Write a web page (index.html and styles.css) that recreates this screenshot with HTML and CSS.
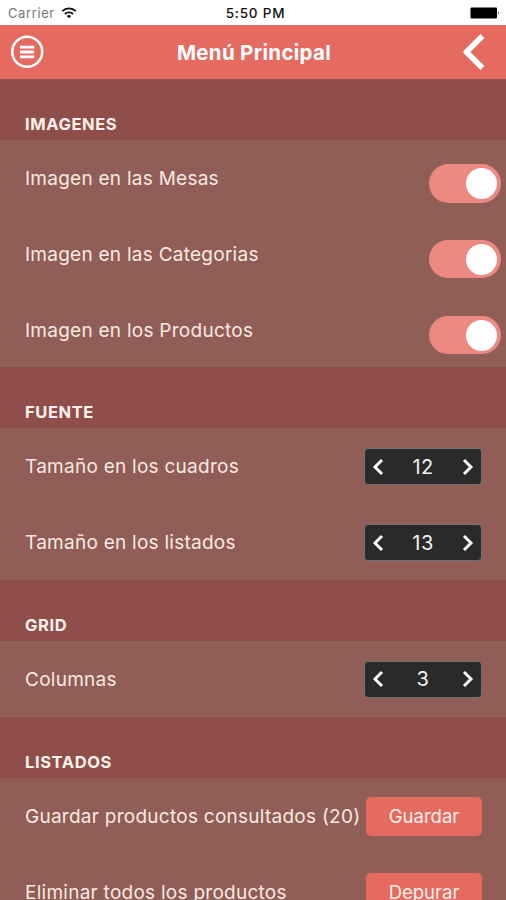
FILE: index.html
```html
<!DOCTYPE html>
<html lang="es">
<head>
    <meta charset="UTF-8">
    <meta name="viewport" content="width=device-width, initial-scale=1.0">
    <title>Menú Principal</title>
    <link rel="stylesheet" href="styles.css">
</head>
<body>
    <!-- Status bar -->
    <div class="status-bar">
        <div class="carrier">
            <span>Carrier</span>
            <svg class="wifi" width="16" height="12" viewBox="0 0 16 12" fill="none" stroke="#111" stroke-width="1.8">
                <path d="M1.2 4.2a9.6 9.6 0 0 1 13.6 0"/>
                <path d="M3.9 7a5.8 5.8 0 0 1 8.2 0"/>
                <path d="M5.8 9.1a3.2 3.2 0 0 1 4.4 0L8 11.2z" fill="#111" stroke="none"/>
            </svg>
        </div>
        <span class="time">5:50 PM</span>
        <svg class="battery" width="30" height="12" viewBox="0 0 30 12">
            <rect x="0.5" y="0.5" width="26.5" height="11" rx="1"/>
            <path d="M28 4.2q1.4 1.8 0 3.6z"/>
        </svg>
    </div>

    <!-- Header -->
    <header>
        <button class="icon-button" aria-label="Menú">
            <svg width="34" height="34" viewBox="0 0 34 34" fill="none" stroke="#fff">
                <circle cx="17.2" cy="16.8" r="15" stroke-width="2.5"/>
                <path d="M10 12.2h14.2M10 17h14.2M10 21.8h14.2" stroke-width="2.8"/>
            </svg>
        </button>
        <h1>Menú Principal</h1>
        <button class="icon-button" aria-label="Volver">
            <svg width="24" height="38" viewBox="0 0 24 38" fill="none" stroke="#fff" stroke-width="5.6" stroke-linejoin="round">
                <path d="M20.4 3L4.4 19l16 16"/>
            </svg>
        </button>
    </header>

    <!-- Main Content -->
    <main>
        <h2>IMAGENES</h2>
        <div class="row">
            <span class="label">Imagen en las Mesas</span>
            <span class="switch"></span>
        </div>
        <div class="row">
            <span class="label">Imagen en las Categorias</span>
            <span class="switch"></span>
        </div>
        <div class="row">
            <span class="label">Imagen en los Productos</span>
            <span class="switch"></span>
        </div>

        <h2>FUENTE</h2>
        <div class="row">
            <span class="label">Tamaño en los cuadros</span>
            <div class="stepper">
                <svg width="12" height="18" viewBox="0 0 12 18"><path d="M10 2L3 9l7 7"/></svg>
                <span>12</span>
                <svg width="12" height="18" viewBox="0 0 12 18"><path d="M2 2l7 7-7 7"/></svg>
            </div>
        </div>
        <div class="row">
            <span class="label">Tamaño en los listados</span>
            <div class="stepper">
                <svg width="12" height="18" viewBox="0 0 12 18"><path d="M10 2L3 9l7 7"/></svg>
                <span>13</span>
                <svg width="12" height="18" viewBox="0 0 12 18"><path d="M2 2l7 7-7 7"/></svg>
            </div>
        </div>

        <h2>GRID</h2>
        <div class="row">
            <span class="label">Columnas</span>
            <div class="stepper">
                <svg width="12" height="18" viewBox="0 0 12 18"><path d="M10 2L3 9l7 7"/></svg>
                <span>3</span>
                <svg width="12" height="18" viewBox="0 0 12 18"><path d="M2 2l7 7-7 7"/></svg>
            </div>
        </div>

        <h2>LISTADOS</h2>
        <div class="row">
            <span class="label">Guardar productos consultados (20)</span>
            <button class="action-button">Guardar</button>
        </div>
        <div class="row">
            <span class="label">Eliminar todos los productos</span>
            <button class="action-button">Depurar</button>
        </div>
    </main>
</body>
</html>
```

FILE: styles.css
```css
/* General Styles */
* {
    margin: 0;
    padding: 0;
    box-sizing: border-box;
}

body {
    height: 900px;
    overflow: hidden;
    background: #905d57;
    color: #fbe9e2;
    font-family: Inter, "Liberation Sans", sans-serif;
}

svg {
    display: block;
}

button {
    border: none;
    font-family: inherit;
    cursor: pointer;
}

/* Status bar */
.status-bar {
    display: grid;
    grid-template-columns: 1fr auto 1fr;
    align-items: center;
    height: 25px;
    padding: 1px 6px 0 8px;
    background: #fff;
    color: #111;
    font-size: 13px;
}

.carrier {
    display: flex;
    align-items: center;
    gap: 6px;
    color: #777;
    letter-spacing: 0.6px;
}

.time {
    padding-left: 3px;
    font-size: 13.5px;
    font-weight: 500;
    letter-spacing: 0.8px;
}

.battery {
    justify-self: end;
}

/* Header */
header {
    display: flex;
    justify-content: space-between;
    align-items: center;
    height: 54px;
    padding: 0 20px 0 10px;
    background: #e56b60;
    color: #fff;
}

h1 {
    margin-left: 2px;
    padding-top: 1px;
    font-size: 20.5px;
    font-weight: 700;
    letter-spacing: 0.3px;
}

.icon-button {
    background: none;
}

/* Section titles */
h2 {
    height: 61px;
    padding: 35px 25px 0;
    background: #8f4e49;
    color: #fff2ec;
    font-size: 16.5px;
    font-weight: 700;
    line-height: 21px;
    letter-spacing: 0.6px;
}

/* Rows */
.row {
    display: flex;
    justify-content: space-between;
    align-items: flex-start;
    height: 75.8px;
    padding: 20px 24px 0 25px;
}

.label {
    font-size: 19px;
    line-height: 37px;
    letter-spacing: 0.26px;
    white-space: nowrap;
}

/* Switch */
.switch {
    width: 72px;
    height: 38.5px;
    margin: 4px -19px 0 0;
    padding: 4px;
    border-radius: 20px;
    background: #ec8a81;
}

.switch::after {
    content: "";
    display: block;
    width: 31px;
    height: 31px;
    margin-left: auto;
    border-radius: 50%;
    background: #fff;
}

/* Stepper */
.stepper {
    display: flex;
    justify-content: space-between;
    align-items: center;
    width: 118px;
    height: 37px;
    padding: 0 7px;
    border: 1px solid #6f7472;
    border-radius: 4px;
    background: #292a29;
    color: #f4f4f4;
    font-size: 20px;
    letter-spacing: 0.4px;
}

.stepper svg {
    fill: none;
    stroke: #fff;
    stroke-width: 2.9;
}

/* Buttons */
.action-button {
    width: 116px;
    height: 39px;
    margin-top: -1px;
    border-radius: 5px;
    background: #e56b60;
    color: #fff0ea;
    font-size: 18.5px;
}
```
